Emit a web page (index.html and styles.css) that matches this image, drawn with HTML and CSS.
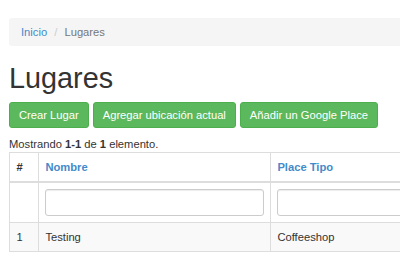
FILE: index.html
```html
<!DOCTYPE html>
<html lang="es">
<head>
    <meta charset="UTF-8">
    <meta name="viewport" content="width=device-width, initial-scale=1.0">
    <title>Lugares</title>
    <link rel="stylesheet" href="styles.css">
</head>
<body>
    <div class="page">
        <div class="inner">
            <ul class="breadcrumb">
                <li><a href="#">Inicio</a></li>
                <li class="active">Lugares</li>
            </ul>

            <h1>Lugares</h1>

            <p class="actions">
                <a class="btn" href="#">Crear Lugar</a>
                <a class="btn" href="#">Agregar ubicación actual</a>
                <a class="btn" href="#">Añadir un Google Place</a>
            </p>

            <div class="summary">Mostrando <b>1-1</b> de <b>1</b> elemento.</div>

            <table class="grid">
                <colgroup>
                    <col class="col-num">
                    <col class="col-name">
                    <col class="col-type">
                </colgroup>
                <thead>
                    <tr>
                        <th>#</th>
                        <th><a href="#">Nombre</a></th>
                        <th><a href="#">Place Tipo</a></th>
                    </tr>
                    <tr class="filters">
                        <td></td>
                        <td><input type="text" class="form-control"></td>
                        <td><input type="text" class="form-control"></td>
                    </tr>
                </thead>
                <tbody>
                    <tr>
                        <td>1</td>
                        <td>Testing</td>
                        <td>Coffeeshop</td>
                    </tr>
                </tbody>
            </table>
        </div>
    </div>
</body>
</html>
```
FILE: styles.css
```css
body {
    margin: 0;
    font-family: "Liberation Sans", Arial, sans-serif;
    font-size: 11.2px;
    line-height: 16px;
    color: #333;
    background: #fff;
}
a {
    color: #428bca;
    text-decoration: none;
}
.page {
    padding: 18px 0 0 9px;
    overflow: hidden;
}
.inner {
    width: 620px;
}
.breadcrumb {
    list-style: none;
    margin: 0 0 16px;
    padding: 6px 12px;
    background-color: #f5f5f5;
    border-radius: 3px;
}
.breadcrumb li {
    display: inline-block;
}
.breadcrumb li + li:before {
    content: "/\00a0";
    padding: 0 4px;
    color: #ccc;
}
.breadcrumb .active {
    color: #777;
}
h1 {
    margin: 0 0 8px;
    font-size: 28.8px;
    line-height: 32px;
    font-weight: normal;
}
.actions {
    margin: 0;
    display: flex;
    gap: 4px;
}
.btn {
    display: inline-block;
    padding: 4px 9px;
    line-height: 16px;
    color: #fff;
    background-color: #5cb85c;
    border: 1px solid #4cae4c;
    border-radius: 3px;
}
.summary {
    margin-top: 9px;
    line-height: 15px;
}
.grid {
    table-layout: fixed;
    width: 620px;
    border-collapse: collapse;
    border: 1px solid #ddd;
}
.col-num {
    width: 29px;
}
.col-name {
    width: 232px;
}
.grid th, .grid td {
    border: 1px solid #ddd;
    padding: 6px 6.4px;
    text-align: left;
    vertical-align: top;
}
.grid th {
    border-bottom: 2px solid #ddd;
    font-weight: bold;
}
.grid tbody tr:nth-child(odd) td {
    background-color: #f9f9f9;
}
.form-control {
    display: block;
    box-sizing: border-box;
    width: 100%;
    height: 27px;
    margin: 0;
    padding: 4px 9px;
    font: inherit;
    border: 1px solid #ccc;
    border-radius: 3px;
    box-shadow: inset 0 1px 1px rgba(0, 0, 0, 0.075);
}
```
